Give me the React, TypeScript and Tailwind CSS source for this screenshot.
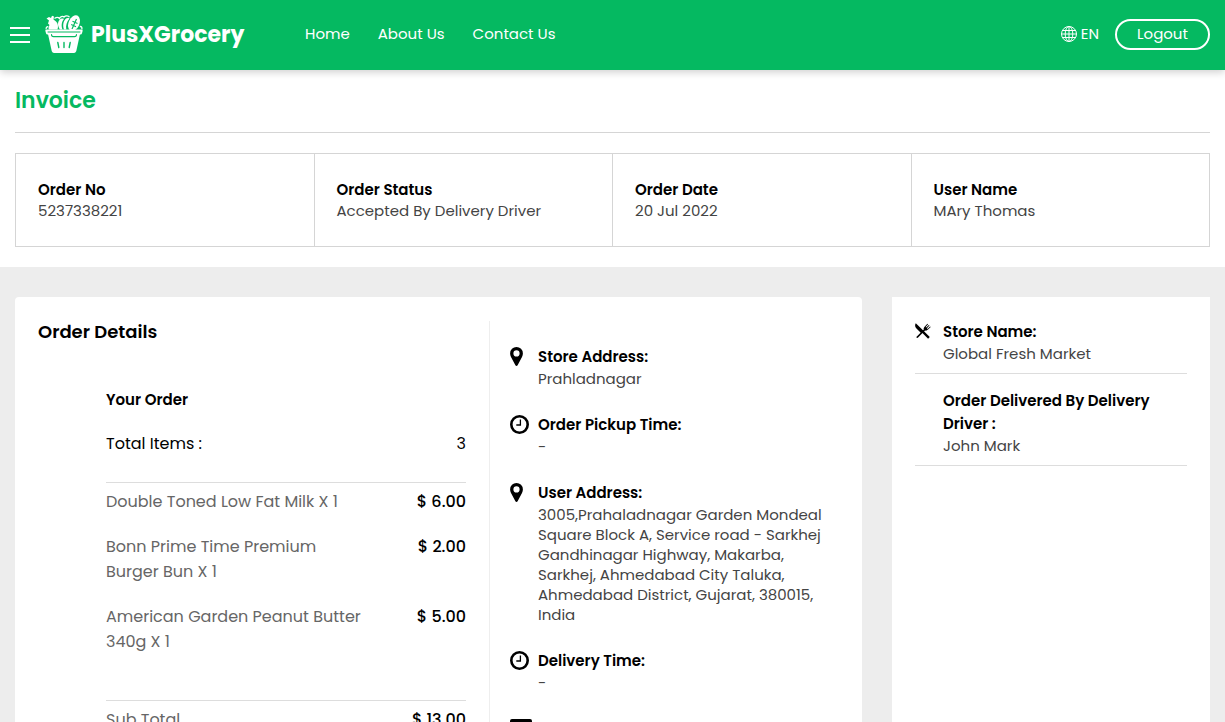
import React from "react";

type Line = { name: string; price: string };

const summary = [
  { label: "Order No", value: "5237338221" },
  { label: "Order Status", value: "Accepted By Delivery Driver" },
  { label: "Order Date", value: "20 Jul 2022" },
  { label: "User Name", value: "MAry Thomas" },
];

const items: Line[] = [
  { name: "Double Toned Low Fat Milk X 1", price: "$ 6.00" },
  { name: "Bonn Prime Time Premium Burger Bun X 1", price: "$ 2.00" },
  { name: "American Garden Peanut Butter 340g X 1", price: "$ 5.00" },
];

function PinIcon() {
  return (
    <svg aria-hidden="true" viewBox="0 0 13 19" className="h-[19px] w-[13px]">
      <path fillRule="evenodd" d="M6.5 0A6.4 6.4 0 0 0 .1 6.4c0 1.4.4 2.4.9 3.5L5.4 18.3c.5.9 1.7.9 2.2 0L12 9.9c.5-1.1.9-2.100.9-3.500A6.400 6.400 0 0 0 6.500 0Zm0 3.300a3.100 3.100 0 1 1 0 6.200 3.100 3.100 0 0 1 0-6.200Z" />
    </svg>
  );
}

function ClockIcon() {
  return (
    <svg aria-hidden="true" viewBox="0 0 19 19" className="size-[19px]" fill="none" stroke="black">
      <circle cx="9.5" cy="9.5" r="8.2" strokeWidth="2.6" />
      <path d="M10.4 4.6V10H6.300" strokeWidth="1.300" />
    </svg>
  );
}

function CardIcon() {
  return (
    <svg aria-hidden="true" viewBox="0 0 22 17" className="h-[17px] w-[22px]">
      <path fillRule="evenodd" d="M2 0h18a2 2 0 0 1 2 2v13a2 2 0 0 1-2 2H2a2 2 0 0 1-2-2V2a2 2 0 0 1 2-2Zm0 5v3h18V5Z" />
    </svg>
  );
}

function UtensilsIcon() {
  return (
    <svg aria-hidden="true" viewBox="0 0 16 16" className="size-4">
      <path d="M.8.3 9 8.2l5.800 5.800-1.700 1.700L7.400 10 6 10 1 5C-.2 3.500-.1 1.500.8.300Z" />
      <path d="M1.100 14.200 8.800 6.500c-.4-1.200.1-2.100 1-3L12.400.7l.7.600-2.500 2.700.6.600 2.700-2.600.6.600-2.600 2.700.6.600 2.600-2.500.6.700-2.700 2.500c-.9.900-1.800 1.300-3 .9l-7.400 7.500Z" />
    </svg>
  );
}

function GlobeIcon() {
  return (
    <svg aria-hidden="true" viewBox="0 0 16 16" className="size-4" fill="none" stroke="white">
      <circle cx="8" cy="8" r="7.5" />
      <ellipse cx="8" cy="8" rx="3.800" ry="7.500" />
      <path d="M8 .5v15M.5 8h15M1.500 4.500h13M1.500 11.500h13" />
    </svg>
  );
}

function BasketLogo() {
  return (
    <svg aria-hidden="true" viewBox="0 0 38 38" className="size-[38px] shrink-0">
      <path fill="white" d="M1.500 3.500 4 2l2 1L7 .8l2 .7-.5 3 2.500 2c2 1.500 2.500 5 1.500 8H4c-.8-1.500-.5-3 .5-4.500L3 8.500l1-3Z" />
      <path fill="none" stroke="white" strokeWidth="1.300" d="M1.200 14c-.3-1.500.8-2.500 2-2.300M9.500 3.500c2-1.500 4-1.200 5 0 .8-2 3-2.700 4.500-1.500 1.500-1.700 4.500-1.500 5.500.3" />
      <path fill="white" d="M14.500 5c-2.500 2.500-1.500 7 .5 9.500h2.500c-1.500-3.500-1-8 1.500-10.500-1.500-.8-3.300-.3-4.500 1ZM20.500 4c-2.700 3-2.700 7.500-1.500 10.500h2.300c-.8-4 .5-8 3.200-11-1.300-.7-3-.5-4 .5Z" />
      <ellipse cx="29" cy="8.200" rx="5.400" ry="8.300" transform="rotate(24 29 8.200)" fill="white" />
      <path fill="none" stroke="#05b961" strokeWidth="1.200" d="m31.500 4-4.500 10M27.500 6.200l5 2.300M26.200 9.500l4.800 2.200" />
      <path fill="none" stroke="white" strokeWidth="1.300" d="M34.800 11.500c1.800-.2 2.500 1 2 2.700" />
      <path fill="white" d="M1.500 14.500h35c1 0 1.300.6 1.100 1.500l-.7 2.500c-.2.700-.6 1-1.300 1H2.400c-.7 0-1.100-.3-1.300-1L.4 16c-.2-.9.1-1.500 1.100-1.500Z" />
      <path fill="white" d="M3 19h32l-3.600 16.500c-.4 1.600-1 2.500-2.500 2.500H9.100c-1.500 0-2.100-.9-2.500-2.500Z" />
      <g fill="none" stroke="#05b961" strokeLinecap="round">
        <path d="M3 17h32" strokeWidth="1" />
        <path d="M6.500 19.500c0 1.600.6 2.100 2 2.100h21c1.400 0 2-.5 2-2.100" strokeWidth="1.100" />
        <path d="m12.800 27.500 1 5M19 27.500v5M25.200 27.500l-1 5" strokeWidth="1.400" />
      </g>
    </svg>
  );
}

function Detail({ icon, label, children }: { icon: React.ReactNode; label: string; children: React.ReactNode }) {
  return (
    <div className="flex">
      <div className="w-7 shrink-0 pt-0.5">{icon}</div>
      <div className="min-w-0 flex-1">
        <h3 className="text-[15px] leading-6 font-semibold">{label}</h3>
        <p className="text-[15px] leading-5 text-[#444]">{children}</p>
      </div>
    </div>
  );
}

export default function App() {
  return (
    <div className="min-h-screen bg-[#ededed] font-[Poppins,Inter,sans-serif] text-black">
      <header className="relative flex h-[70px] items-center bg-[#05b961] pr-[15px] pb-0.5 pl-[10px] text-white shadow-[0_2px_8px_rgba(0,0,0,0.2)]">
        <button type="button" aria-label="Menu" className="flex w-5 flex-col gap-[5px] pt-0.5">
          <span className="h-0.5 w-5 bg-white" />
          <span className="h-0.5 w-5 bg-white" />
          <span className="h-0.5 w-5 bg-white" />
        </button>
        <a href="#" className="ml-[15px] flex w-[200px] items-center gap-2 text-[22px] font-bold whitespace-nowrap">
          <BasketLogo />
          PlusXGrocery
        </a>
        <nav className="ml-[60px] flex gap-7 text-[15px]">
          <a href="#">Home</a>
          <a href="#">About Us</a>
          <a href="#">Contact Us</a>
        </nav>
        <div className="ml-auto flex items-center gap-4">
          <button type="button" className="flex items-center gap-1 text-[15px]">
            <GlobeIcon />
            EN
          </button>
          <button type="button" className="h-[31px] w-[95px] rounded-full border-2 border-white text-[15px]">Logout</button>
        </div>
      </header>

      <section className="bg-white px-[15px] pb-5">
        <h1 className="border-b border-[#d5d5d5] py-4 text-[22px] leading-[30px] font-semibold text-[#05b961]">Invoice</h1>
        <dl className="mt-5 grid grid-cols-4 border-y border-l border-[#d5d5d5]">
          {summary.map((s) => (
            <div key={s.label} className="border-r border-[#d5d5d5] px-[22px] py-[25px]">
              <dt className="text-[15px] leading-[22px] font-semibold">{s.label}</dt>
              <dd className="text-[15px] leading-5 text-[#444]">{s.value}</dd>
            </div>
          ))}
        </dl>
      </section>

      <main className="grid grid-cols-[minmax(0,847fr)_minmax(0,318fr)] gap-[30px] px-[15px] py-[30px]">
        <section className="grid grid-cols-[minmax(0,452fr)_minmax(0,349fr)] rounded-[4px] bg-white px-[23px] py-6">
          <div className="border-r border-[#eee] pr-[23px]">
            <h2 className="text-[18px] leading-[22px] font-semibold">Order Details</h2>
            <div className="mt-[46px] pl-[68px]">
              <h3 className="text-[15px] leading-[22px] font-semibold">Your Order</h3>
              <div className="flex justify-between border-b border-[#ddd] pt-5 pb-[26px] text-base leading-[25px]">
                <span>Total Items :</span>
                <span>3</span>
              </div>
              <ul className="flex flex-col gap-5 border-b border-[#ddd] pt-[6px] pb-[46px] text-base leading-[25px]">
                {items.map((i) => (
                  <li key={i.name} className="flex justify-between">
                    <span className="w-[265px] text-[#666]">{i.name}</span>
                    <span className="font-medium">{i.price}</span>
                  </li>
                ))}
              </ul>
              <div className="flex justify-between pt-[6px] text-base leading-[25px]">
                <span className="text-[#666]">Sub Total</span>
                <span className="font-medium">$ 13.00</span>
              </div>
            </div>
          </div>
          <div className="flex flex-col gap-6 pt-6 pl-5">
            <Detail icon={<PinIcon />} label="Store Address:">Prahladnagar</Detail>
            <Detail icon={<ClockIcon />} label="Order Pickup Time:">-</Detail>
            <Detail icon={<PinIcon />} label="User Address:">
              3005,Prahaladnagar Garden Mondeal Square Block A, Service road - Sarkhej Gandhinagar Highway, Makarba, Sarkhej, Ahmedabad City Taluka, Ahmedabad District, Gujarat, 380015, India
            </Detail>
            <Detail icon={<ClockIcon />} label="Delivery Time:">-</Detail>
            <div className="pt-0.5"><CardIcon /></div>
          </div>
        </section>
        <aside className="bg-white px-[23px] py-[23px]">
          <div className="flex border-b border-[#ddd] pb-2">
            <div className="w-7 shrink-0 pt-[3px]"><UtensilsIcon /></div>
            <div>
              <h3 className="text-[15px] leading-[23px] font-semibold">Store Name:</h3>
              <p className="text-[15px] leading-[22px] text-[#444]">Global Fresh Market</p>
            </div>
          </div>
          <div className="border-b border-[#ddd] pt-[15px] pb-2 pl-7">
            <h3 className="text-[15px] leading-[23px] font-semibold">Order Delivered By Delivery Driver :</h3>
            <p className="text-[15px] leading-[22px] text-[#444]">John Mark</p>
          </div>
        </aside>
      </main>
    </div>
  );
}
